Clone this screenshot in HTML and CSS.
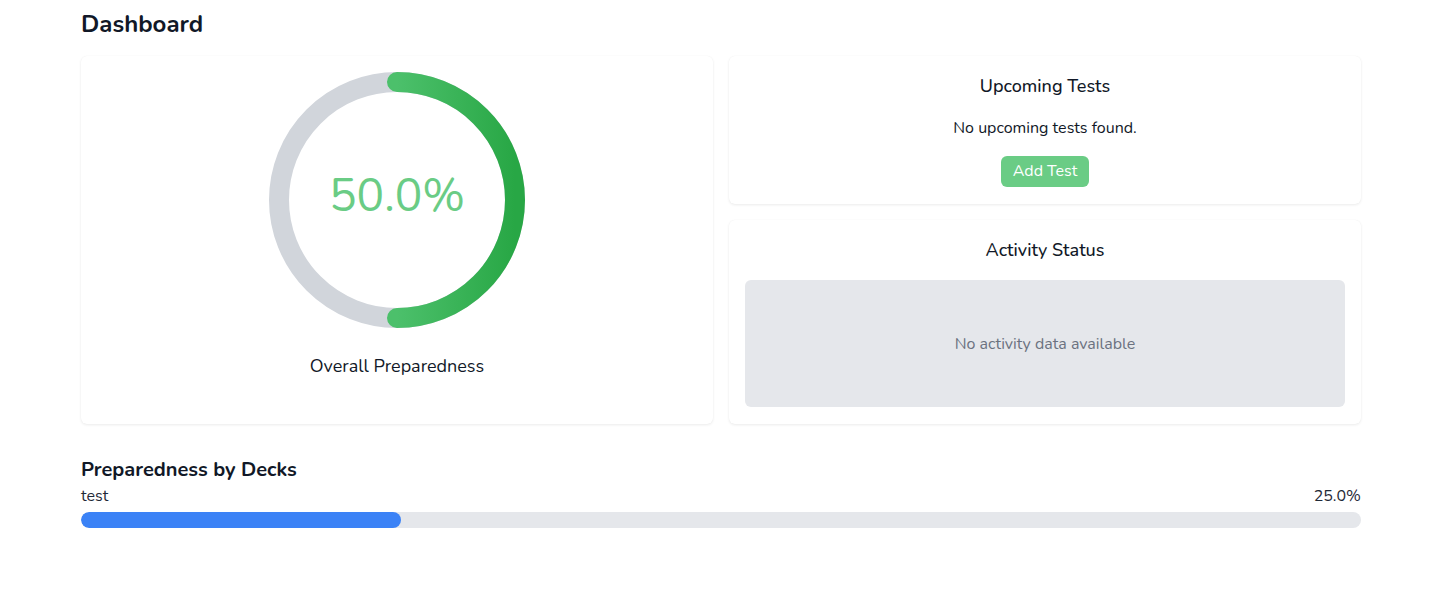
FILE: index.html
```html
<!DOCTYPE html>
<html lang="en">
<head>
  <meta charset="UTF-8" />
  <meta name="viewport" content="width=device-width, initial-scale=1.0"/>
  <title>Dashboard</title>
  <link rel="stylesheet" href="styles.css">
</head>
<body>
<div class="page">
  <h1 class="page-title">Dashboard</h1>

  <div class="grid">
    <!-- Overall preparedness -->
    <div class="card overall">
      <div class="donut">
        <svg width="256" height="256" viewBox="0 0 256 256">
          <defs>
            <linearGradient id="greenGrad" x1="0" y1="0" x2="1" y2="0">
              <stop offset="0%" stop-color="#4cc06b"/>
              <stop offset="100%" stop-color="#28a745"/>
            </linearGradient>
          </defs>
          <circle cx="128" cy="128" r="118" fill="none" stroke="#d1d5db" stroke-width="20"/>
          <path d="M128 10 A118 118 0 0 1 128 246" fill="none" stroke="url(#greenGrad)" stroke-width="20" stroke-linecap="round"/>
        </svg>
        <div class="donut-value">50.0%</div>
      </div>
      <div class="overall-label">Overall Preparedness</div>
    </div>

    <div class="side">
      <!-- Upcoming tests -->
      <div class="card upcoming">
        <h2 class="card-title">Upcoming Tests</h2>
        <p class="muted-line">No upcoming tests found.</p>
        <button class="add-btn">Add Test</button>
      </div>

      <!-- Activity -->
      <div class="card activity">
        <h2 class="card-title">Activity Status</h2>
        <div class="activity-empty">No activity data available</div>
      </div>
    </div>
  </div>

  <h2 class="section-title">Preparedness by Decks</h2>
  <div class="deck">
    <div class="deck-row">
      <span>test</span>
      <span>25.0%</span>
    </div>
    <div class="bar">
      <div class="bar-fill" style="width: 25%"></div>
    </div>
  </div>
</div>
</body>
</html>
```

FILE: styles.css
```css
* {
  margin: 0;
  padding: 0;
  box-sizing: border-box;
}

body {
  font-family: "Nunito", Lato, "Noto Sans", sans-serif;
  background: #fff;
  color: #111827;
}

.page {
  width: 1280px;
  margin-left: 81px;
  padding-top: 8px;
}

.page-title {
  font-size: 24px;
  font-weight: 700;
  line-height: 32px;
  margin-bottom: 16px;
}

.grid {
  display: grid;
  grid-template-columns: 1fr 1fr;
  gap: 16px;
}

.card {
  background: #fff;
  border-radius: 6px;
  box-shadow: 0 1px 3px rgba(0,0,0,0.08), 0 0 1px rgba(0,0,0,0.05);
  padding: 16px;
}

.overall {
  display: flex;
  flex-direction: column;
  align-items: center;
  height: 368px;
}

.donut {
  position: relative;
  width: 256px;
  height: 256px;
}

.donut svg {
  display: block;
}

.donut-value {
  position: absolute;
  top: 0;
  left: 0;
  right: 0;
  bottom: 0;
  display: flex;
  justify-content: center;
  align-items: center;
  padding-bottom: 10px;
  font-size: 46px;
  font-weight: 400;
  color: #6acc85;
}

.overall-label {
  margin-top: 24px;
  font-size: 18px;
  line-height: 28px;
}

.side {
  display: flex;
  flex-direction: column;
  gap: 16px;
}

.card-title {
  font-size: 18px;
  font-weight: 500;
  line-height: 28px;
  text-align: center;
}

.upcoming {
  height: 148px;
  display: flex;
  flex-direction: column;
  align-items: center;
}

.muted-line {
  margin-top: 16px;
  font-size: 16px;
  line-height: 24px;
}

.add-btn {
  margin-top: 16px;
  font-family: inherit;
  font-size: 16px;
  color: #fff;
  background: #6acc85;
  border: none;
  border-radius: 6px;
  padding: 4px 12px;
  line-height: 23px;
}

.activity {
  height: 204px;
}

.activity-empty {
  margin-top: 16px;
  height: 127px;
  background: #e5e7eb;
  border-radius: 6px;
  display: flex;
  justify-content: center;
  align-items: center;
  color: #6b7280;
  font-size: 16px;
}

.section-title {
  margin-top: 32px;
  font-size: 20px;
  font-weight: 700;
  line-height: 28px;
}

.deck-row {
  display: flex;
  justify-content: space-between;
  margin-top: 1px;
  font-size: 16px;
  line-height: 22px;
  color: #1f2937;
}

.bar {
  margin-top: 5px;
  height: 16px;
  background: #e5e7eb;
  border-radius: 8px;
  overflow: hidden;
}

.bar-fill {
  height: 100%;
  background: #3b82f6;
  border-radius: 8px;
}
```
